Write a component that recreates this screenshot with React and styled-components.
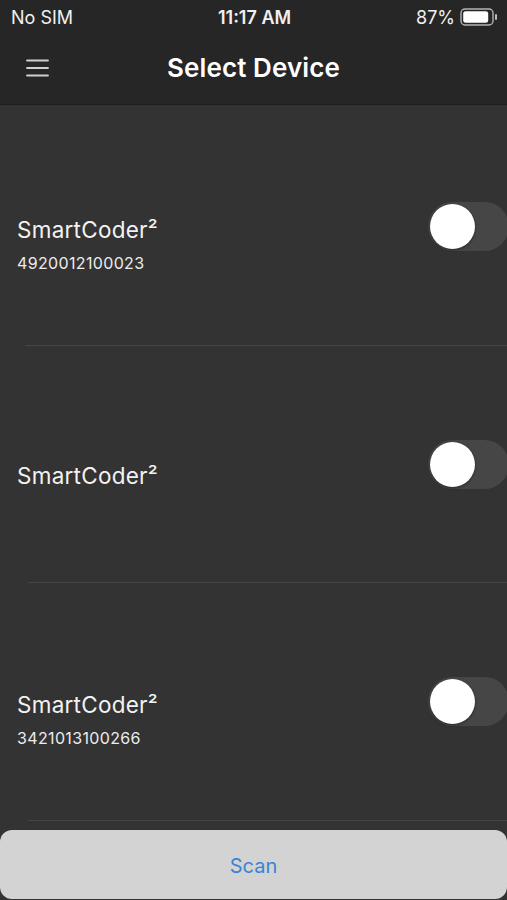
import React from "react";
import styled, { createGlobalStyle } from "styled-components";

const GlobalStyle = createGlobalStyle`
  html, body {
    margin: 0;
    padding: 0;
    background: #333333;
  }
  body {
    font-family: Inter, "Liberation Sans", sans-serif;
    -webkit-font-smoothing: antialiased;
  }
`;

const Screen = styled.div`
  width: 507px;
  height: 900px;
  overflow: hidden;
  position: relative;
  background: #333333;
  color: #f2f2f2;
`;

const TopBar = styled.header`
  background: #262626;
  border-bottom: 1px solid #1e1e1e;
`;

const StatusBar = styled.div`
  height: 34px;
  display: grid;
  grid-template-columns: 1fr auto 1fr;
  align-items: center;
  padding: 0 9px 0 11px;
  font-size: 18px;
  color: #f0f0f0;
`;

const Carrier = styled.span`
  font-weight: 400;
`;

const Clock = styled.span`
  font-weight: 600;
`;

const BatteryGroup = styled.div`
  justify-self: end;
  display: flex;
  align-items: center;
  gap: 5px;
`;

const NavBar = styled.div`
  height: 66px;
  display: grid;
  grid-template-columns: 60px 1fr 60px;
  align-items: center;
  padding-bottom: 4px;
`;

const MenuButton = styled.button`
  background: none;
  border: 0;
  padding: 2px 0 0 26px;
  display: flex;
  align-items: center;
  cursor: pointer;
`;

const Title = styled.h1`
  margin: 0;
  text-align: center;
  font-size: 26px;
  font-weight: 600;
  color: #ffffff;
  letter-spacing: 0.1px;
`;

const List = styled.ul`
  list-style: none;
  margin: 0;
  padding: 3px 0 0;
`;

const Row = styled.li`
  height: 237.5px;
  display: flex;
  align-items: center;
  justify-content: space-between;
  position: relative;
  &::after {
    content: "";
    position: absolute;
    left: ${(p) => p.$inset}px;
    right: 0;
    bottom: 0;
    height: 1px;
    background: #454545;
  }
`;

const Info = styled.div`
  padding: ${(p) => (p.$single ? 23 : 35)}px 0 0 17px;
  display: flex;
  flex-direction: column;
`;

const Name = styled.div`
  font-size: 22.5px;
  line-height: 30px;
  letter-spacing: 0.25px;
  color: #f2f2f2;
`;

const Serial = styled.div`
  margin-top: 7px;
  font-size: 16px;
  line-height: 22px;
  letter-spacing: 0.35px;
  color: #ececec;
`;

const Track = styled.div`
  width: 81px;
  height: 49px;
  border-radius: 25px;
  background: #464646;
  margin-right: -2px;
  display: flex;
  align-items: center;
  padding-left: 2px;
  box-sizing: border-box;
`;

const Knob = styled.div`
  width: 45px;
  height: 45px;
  border-radius: 50%;
  background: #ffffff;
  box-shadow: 0 1px 3px rgba(0, 0, 0, 0.45);
`;

const Sheet = styled.div`
  position: absolute;
  left: 0;
  right: 0;
  bottom: 1px;
  height: 69px;
  border-radius: 12px;
  background: #d3d3d3;
  display: flex;
  align-items: center;
  justify-content: center;
`;

const ScanButton = styled.button`
  background: none;
  border: 0;
  font-family: inherit;
  font-size: 20px;
  color: #3b84d4;
  cursor: pointer;
  padding: 0;
  margin-top: 2px;
`;

const Hamburger = () => (
  <svg width="23" height="18" viewBox="0 0 23 18">
    <g stroke="#cfcfcf" strokeWidth="1.8" strokeLinecap="round">
      <line x1="1" y1="1.5" x2="22" y2="1.5" />
      <line x1="1" y1="9" x2="22" y2="9" />
      <line x1="1" y1="16.5" x2="22" y2="16.5" />
    </g>
  </svg>
);

const Battery = () => (
  <svg width="38" height="18" viewBox="0 0 38 18">
    <rect x="1" y="1" width="32" height="16" rx="4" fill="none" stroke="#f0f0f0" strokeWidth="1.4" opacity="0.7" />
    <rect x="3.2" y="3.2" width="25" height="11.6" rx="2.4" fill="#ffffff" />
    <rect x="35" y="6" width="2" height="6" rx="1" fill="#bbbbbb" />
  </svg>
);

const devices = [
  { name: "SmartCoder²", serial: "4920012100023", inset: 25 },
  { name: "SmartCoder²", serial: "", inset: 28 },
  { name: "SmartCoder²", serial: "3421013100266", inset: 28 },
];

const App = () => {
  return (
    <Screen>
      <GlobalStyle />
      <TopBar>
        <StatusBar>
          <Carrier>No SIM</Carrier>
          <Clock>11:17 AM</Clock>
          <BatteryGroup>
            <span>87%</span>
            <Battery />
          </BatteryGroup>
        </StatusBar>
        <NavBar>
          <MenuButton aria-label="Menu">
            <Hamburger />
          </MenuButton>
          <Title>Select Device</Title>
          <span />
        </NavBar>
      </TopBar>

      <List>
        {devices.map((d, i) => (
          <Row key={i} $inset={d.inset}>
            <Info $single={!d.serial}>
              <Name>{d.name}</Name>
              {d.serial && <Serial>{d.serial}</Serial>}
            </Info>
            <Track>
              <Knob />
            </Track>
          </Row>
        ))}
      </List>

      <Sheet>
        <ScanButton>Scan</ScanButton>
      </Sheet>
    </Screen>
  );
};

export default App;
